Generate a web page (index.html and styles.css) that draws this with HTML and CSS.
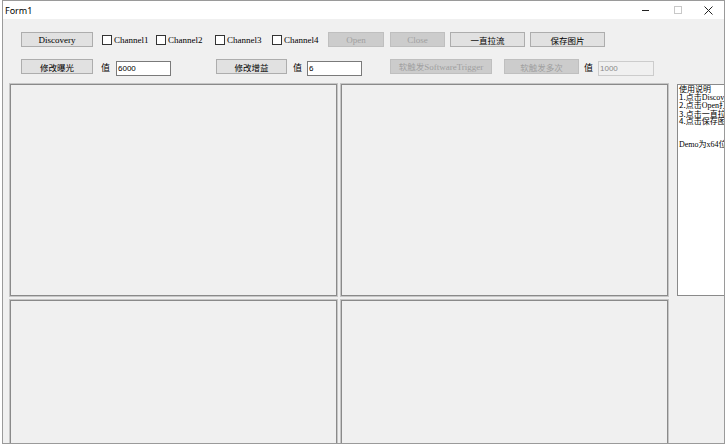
FILE: index.html
```html
<!DOCTYPE html>
<html lang="zh-CN">
<head>
    <meta charset="UTF-8">
    <title>Form1</title>
    <link rel="stylesheet" href="styles.css">
</head>
<body>
    <div class="window">
        <div class="titlebar">
            <span class="title">Form1</span>
            <div class="controls">
                <span class="ctl"><span class="min"></span></span>
                <span class="ctl"><span class="max"></span></span>
                <span class="ctl">
                    <svg width="9" height="9" viewBox="0 0 9 9"><path d="M0.5 0.5L8.5 8.5M8.5 0.5L0.5 8.5" stroke="#222" stroke-width="1"/></svg>
                </span>
            </div>
        </div>

        <div class="client">
            <div class="row row1">
                <button class="btn" id="btnDiscovery"><span class="lat">Discovery</span></button>
                <label class="check" id="ch1"><span class="box"></span><span class="lat">Channel1</span></label>
                <label class="check" id="ch2"><span class="box"></span><span class="lat">Channel2</span></label>
                <label class="check" id="ch3"><span class="box"></span><span class="lat">Channel3</span></label>
                <label class="check" id="ch4"><span class="box"></span><span class="lat">Channel4</span></label>
                <button class="btn off" id="btnOpen"><span class="lat">Open</span></button>
                <button class="btn off" id="btnClose"><span class="lat">Close</span></button>
                <button class="btn" id="btnGrab">一直拉流</button>
                <button class="btn" id="btnSave">保存图片</button>
            </div>

            <div class="row row2">
                <button class="btn" id="btnExposure">修改曝光</button>
                <span class="val" id="val1">值</span>
                <input class="field" id="txtExposure" type="text" value="6000">
                <button class="btn" id="btnGain">修改增益</button>
                <span class="val" id="val2">值</span>
                <input class="field" id="txtGain" type="text" value="6">
                <button class="btn off" id="btnTrigger">软触发<span class="lat">SoftwareTrigger</span></button>
                <button class="btn off" id="btnMulti">软触发多次</button>
                <span class="val" id="val3">值</span>
                <input class="field" id="txtCount" type="text" value="1000" disabled>
            </div>

            <div class="views">
                <div class="view"></div>
                <div class="view"></div>
                <div class="notes">使用说明<br>1.点击<span class="lat">Discovery</span>搜索设备<br>2.点击<span class="lat">Open</span>打开设备<br>3.点击一直拉流<br>4.点击保存图片<br><br><br><span class="lat">Demo</span>为<span class="lat">x64</span>位程序</div>
                <div class="view"></div>
                <div class="view"></div>
            </div>
        </div>
    </div>
</body>
</html>
```

FILE: styles.css
```css
body {
    margin: 0;
    width: 725px;
    height: 445px;
    overflow: hidden;
    background-color: #ffffff;
}

.window {
    margin-left: 2px;
    width: 721px;
    height: 442px;
    border: 1px solid #9a9a9a;
    background-color: #f0f0f0;
    overflow: hidden;
    font-family: "Noto Sans CJK SC", sans-serif;
    font-size: 8.5px;
    color: #000;
}

.titlebar {
    height: 18px;
    background-color: #ffffff;
    display: flex;
    align-items: center;
}

.title {
    font-family: "Noto Sans", sans-serif;
    font-size: 9px;
    padding-left: 2px;
}

.controls {
    margin-left: auto;
    display: flex;
    height: 100%;
}

.ctl {
    width: 31px;
    display: flex;
    align-items: center;
    justify-content: center;
}

.min {
    width: 7px;
    height: 1px;
    background-color: #222;
    margin-left: -3px;
}

.max {
    width: 6px;
    height: 6px;
    border: 1px solid #c8c8c8;
}

.client {
    height: 424px;
    overflow: hidden;
}

.lat {
    font-family: "Liberation Serif", serif;
    font-size: 9px;
}

.row {
    display: flex;
    padding-left: 18px;
}

.row1 {
    margin-top: 13px;
    height: 15px;
    align-items: center;
}

.row2 {
    margin-top: 12px;
    height: 17px;
    align-items: flex-start;
}

.btn {
    height: 15px;
    box-sizing: border-box;
    border: 1px solid #adadad;
    background-color: #e1e1e1;
    font-family: "Noto Sans CJK SC", sans-serif;
    font-size: 8.5px;
    line-height: 12px;
    color: #000;
    padding: 0;
    text-align: center;
    white-space: nowrap;
}

.btn.off {
    background-color: #cccccc;
    border-color: #bfbfbf;
    color: #a0a0a0;
}

#btnDiscovery, #btnExposure { width: 72px; }
#btnOpen { width: 56px; }
#btnClose { width: 55px; margin-left: 6px; }
#btnGrab { width: 75px; margin-left: 5px; }
#btnSave { width: 75px; margin-left: 5px; }
#btnGain { width: 71px; margin-left: 45px; }
#btnTrigger { width: 102px; margin-left: 28px; }
#btnMulti { width: 75px; margin-left: 12px; }

.check {
    display: flex;
    align-items: center;
    color: #000;
}

.check .box {
    width: 8px;
    height: 8px;
    border: 1px solid #333;
    background-color: #fff;
    margin-right: 2px;
}

#ch1 { width: 54px; margin-left: 9px; }
#ch2 { width: 59px; }
#ch3 { width: 57px; }
#ch4 { width: 56px; }

.val {
    font-size: 9px;
    line-height: 17px;
}

#val1 { width: 15px; margin-left: 8px; }
#val2 { width: 14px; margin-left: 6px; }
#val3 { width: 14px; margin-left: 5px; }

.field {
    width: 55px;
    height: 15px;
    box-sizing: border-box;
    margin: 2px 0 0 0;
    padding: 0 1px;
    border: 1px solid #7a7a7a;
    background-color: #fff;
    font-family: "Liberation Sans", sans-serif;
    font-size: 8px;
    color: #000;
    outline: none;
}

.field:disabled {
    width: 56px;
    background-color: #f0f0f0;
    border-color: #cccccc;
    color: #8a8a8a;
}

.views {
    margin-top: 8px;
    padding-left: 7px;
    display: grid;
    grid-template-columns: 327px 327px 60px;
    grid-template-rows: 212px 150px;
    column-gap: 4px;
    row-gap: 4px;
}

.view {
    box-sizing: border-box;
    border: 1px solid #8a8a8a;
    box-shadow: 0 0 0 1px #c6c6c6;
    background-color: #f0f0f0;
}

.notes {
    grid-row: 1;
    grid-column: 3;
    margin-left: 5px;
    box-sizing: border-box;
    border: 1px solid #8a8a8a;
    background-color: #fff;
    padding: 0 0 0 1px;
    font-size: 8px;
    line-height: 7.6px;
    color: #000;
    white-space: nowrap;
    overflow: hidden;
}

.notes .lat {
    font-size: 8px;
}
```
